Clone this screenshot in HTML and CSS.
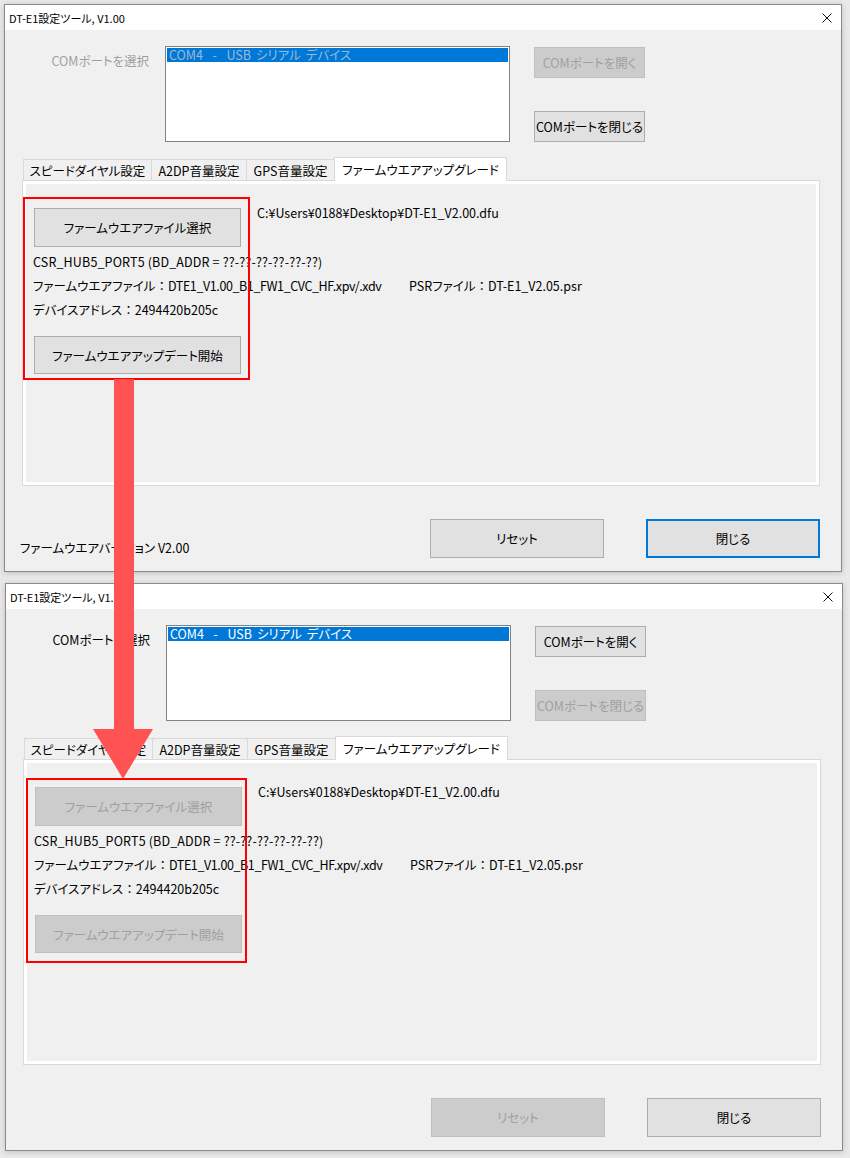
FILE: index.html
```html
<!DOCTYPE html>
<html lang="ja">
<head>
<meta charset="utf-8">
<title>DT-E1設定ツール</title>
<link rel="stylesheet" href="styles.css">
</head>
<body>
<div class="desk">
  <section class="win win--first">
    <header class="titlebar">
      <span class="title">DT-E1設定ツール, V1.00</span>
      <svg class="close" width="10" height="10" viewBox="0 0 10 10"><path d="M0.5 0.5 L9.5 9.5 M9.5 0.5 L0.5 9.5" stroke="#111" stroke-width="1" fill="none"/></svg>
    </header>
    <div class="client">
      <div class="top">
        <span class="port-label is-disabled">COMポートを選択</span>
        <div class="listbox is-disabled"><div class="list-item">COM4  -  USB シリアル デバイス</div></div>
        <div class="port-buttons">
          <button class="btn btn--port" disabled>COMポートを開く</button>
          <button class="btn btn--port">COMポートを閉じる</button>
        </div>
      </div>
      <div class="tabs">
        <div class="tab tab--speed">スピードダイヤル設定</div>
        <div class="tab tab--a2dp">A2DP音量設定</div>
        <div class="tab tab--gps">GPS音量設定</div>
        <div class="tab tab--fw is-active">ファームウエアアップグレード</div>
      </div>
      <div class="panel">
        <div class="panel-inner">
          <div class="row-file">
            <button class="btn btn--fw">ファームウエアファイル選択</button>
            <span class="path">C:¥Users¥0188¥Desktop¥DT-E1_V2.00.dfu</span>
          </div>
          <div class="info info--csr">CSR_HUB5_PORT5 (BD_ADDR = ??-??-??-??-??-??)</div>
          <div class="info"><span class="fw-file">ファームウエアファイル<span class="colon">：</span><span class="fw-name">DTE1_V1.00_B1_FW1_CVC_HF.xpv/.xdv</span></span><span>PSRファイル<span class="colon">：</span>DT-E1_V2.05.psr</span></div>
          <div class="info">デバイスアドレス<span class="colon">：</span>2494420b205c</div>
          <button class="btn btn--fw btn--update">ファームウエアアップデート開始</button>
        </div>
        <div class="highlight highlight--first"></div>
      </div>
      <div class="bottom">
        <span class="version">ファームウエアバージョン V2.00</span>
        <div class="bottom-buttons">
          <button class="btn btn--wide">リセット</button>
          <button class="btn btn--wide is-focused">閉じる</button>
        </div>
      </div>
    </div>
  </section>

  <section class="win win--second">
    <header class="titlebar">
      <span class="title">DT-E1設定ツール, V1.00</span>
      <svg class="close" width="10" height="10" viewBox="0 0 10 10"><path d="M0.5 0.5 L9.5 9.5 M9.5 0.5 L0.5 9.5" stroke="#111" stroke-width="1" fill="none"/></svg>
    </header>
    <div class="client">
      <div class="top">
        <span class="port-label">COMポートを選択</span>
        <div class="listbox"><div class="list-item">COM4  -  USB シリアル デバイス</div></div>
        <div class="port-buttons">
          <button class="btn btn--port">COMポートを開く</button>
          <button class="btn btn--port" disabled>COMポートを閉じる</button>
        </div>
      </div>
      <div class="tabs">
        <div class="tab tab--speed">スピードダイヤル設定</div>
        <div class="tab tab--a2dp">A2DP音量設定</div>
        <div class="tab tab--gps">GPS音量設定</div>
        <div class="tab tab--fw is-active">ファームウエアアップグレード</div>
      </div>
      <div class="panel">
        <div class="panel-inner">
          <div class="row-file">
            <button class="btn btn--fw" disabled>ファームウエアファイル選択</button>
            <span class="path">C:¥Users¥0188¥Desktop¥DT-E1_V2.00.dfu</span>
          </div>
          <div class="info info--csr">CSR_HUB5_PORT5 (BD_ADDR = ??-??-??-??-??-??)</div>
          <div class="info"><span class="fw-file">ファームウエアファイル<span class="colon">：</span><span class="fw-name">DTE1_V1.00_B1_FW1_CVC_HF.xpv/.xdv</span></span><span>PSRファイル<span class="colon">：</span>DT-E1_V2.05.psr</span></div>
          <div class="info">デバイスアドレス<span class="colon">：</span>2494420b205c</div>
          <button class="btn btn--fw btn--update" disabled>ファームウエアアップデート開始</button>
        </div>
        <div class="highlight highlight--second"></div>
      </div>
      <div class="bottom">
        <span class="version"></span>
        <div class="bottom-buttons">
          <button class="btn btn--wide" disabled>リセット</button>
          <button class="btn btn--wide">閉じる</button>
        </div>
      </div>
    </div>
  </section>

  <svg class="arrow" width="60" height="400" viewBox="0 0 60 400">
    <rect x="21" y="0" width="20" height="351" fill="#ff5252"/>
    <polygon points="0,350 60,350 30,400" fill="#ff5252"/>
  </svg>
</div>
</body>
</html>
```

FILE: styles.css
```css
* { box-sizing: border-box; }

html, body {
  margin: 0;
  padding: 0;
}

body {
  background: #e9e9e9;
  font-family: "Noto Sans CJK JP", "Noto Sans", sans-serif;
  font-size: 12.5px;
  font-feature-settings: "palt";
  color: #000;
}

.desk {
  position: relative;
  width: 850px;
  height: 1158px;
  padding-top: 4px;
  overflow: hidden;
}

.win {
  width: 838px;
  border: 1px solid #8a8a8a;
  background: #f0f0f0;
  box-shadow: 0 1px 6px rgba(0, 0, 0, 0.18);
}

.win--first { margin-left: 4px; }
.win--second { margin-left: 5px; margin-top: 11px; }

.titlebar {
  height: 25px;
  background: #fff;
  display: flex;
  align-items: center;
  justify-content: space-between;
  padding: 0 9px 0 4px;
}

.title {
  font-size: 11px;
  line-height: 16px;
  color: #000;
}

.close { display: block; margin-top: 1px; }

.client {
  padding: 16px 21px 13px 17px;
}

/* top row */
.top {
  display: flex;
  align-items: flex-start;
  height: 96px;
}

.port-label {
  width: 127px;
  text-align: right;
  line-height: 16px;
  margin-top: 7px;
  white-space: nowrap;
}

.is-disabled.port-label { color: #9f9f9f; }

.listbox {
  width: 345px;
  height: 96px;
  margin-left: 16px;
  border: 1px solid #828282;
  background: #fff;
  padding: 1px;
}

.list-item {
  height: 14px;
  line-height: 14px;
  background: #0078d7;
  color: #fff;
  padding-left: 2px;
  white-space: pre;
  word-spacing: 2px;
}

.listbox.is-disabled .list-item { color: #9fb8d0; }

.port-buttons {
  margin-left: 24px;
  padding-top: 1px;
  display: flex;
  flex-direction: column;
  gap: 33px;
}

/* buttons */
.btn {
  font: inherit;
  color: #000;
  background: #e1e1e1;
  border: 1px solid #adadad;
  border-radius: 0;
  padding: 0;
  margin: 0;
  text-align: center;
  white-space: nowrap;
}

.btn:disabled {
  background: #cccccc;
  border-color: #bfbfbf;
  color: #a0a0a0;
}

.btn--port { width: 111px; height: 31px; }

.btn--fw { width: 207px; height: 39px; }

.btn--update { height: 38px; margin-top: 14px; }

.btn--wide { width: 174px; height: 39px; }

.btn.is-focused { border: 2px solid #0078d7; }

/* tabs */
.tabs {
  margin-top: 15px;
  height: 23px;
  display: flex;
  align-items: flex-end;
  padding-left: 1px;
}

.tab {
  height: 21px;
  border: 1px solid #d9d9d9;
  border-bottom: none;
  background: #f0f0f0;
  display: flex;
  align-items: center;
  justify-content: center;
  line-height: 16px;
  white-space: nowrap;
  padding-top: 1px;
}

.tab + .tab { margin-left: -1px; }

.tab--speed { width: 129px; }
.tab--a2dp { width: 96px; }
.tab--gps { width: 89px; }
.tab--fw { width: 173px; }

.tab.is-active {
  height: 24px;
  margin-bottom: -1px;
  background: #fff;
  position: relative;
  z-index: 1;
  padding-top: 0;
}

/* panel */
.panel {
  position: relative;
  height: 306px;
  border: 1px solid #d9d9d9;
  background: #fff;
  padding: 3px;
}

.panel-inner {
  height: 100%;
  background: #f0f0f0;
  padding: 24px 0 0 8px;
  display: flex;
  flex-direction: column;
  align-items: flex-start;
}

.row-file {
  display: flex;
  align-items: flex-start;
}

.path {
  margin-left: 16px;
  margin-top: -3px;
  line-height: 16px;
  white-space: nowrap;
}

.info {
  line-height: 24px;
  margin-left: -1px;
  white-space: nowrap;
}

.info--csr { letter-spacing: 0.15px; }

.row-file + .info { margin-top: 3px; }

.colon { font-feature-settings: normal; }

.fw-file {
  display: inline-block;
  width: 376px;
}

.fw-name { letter-spacing: -0.4px; }

.highlight {
  position: absolute;
  border: 2px solid #ff0000;
  pointer-events: none;
}

.highlight--first { left: 0; top: 16px; width: 227px; height: 183px; }
.highlight--second { left: 2px; top: 18px; width: 221px; height: 185px; }

/* bottom */
.bottom {
  margin-top: 33px;
  display: flex;
  justify-content: space-between;
  align-items: flex-end;
  height: 39px;
}

.version {
  margin-left: -2px;
  margin-bottom: 2px;
  line-height: 16px;
}

.bottom-buttons {
  display: flex;
  gap: 42px;
}

/* annotation arrow */
.arrow {
  position: absolute;
  left: 93px;
  top: 379px;
}
```
